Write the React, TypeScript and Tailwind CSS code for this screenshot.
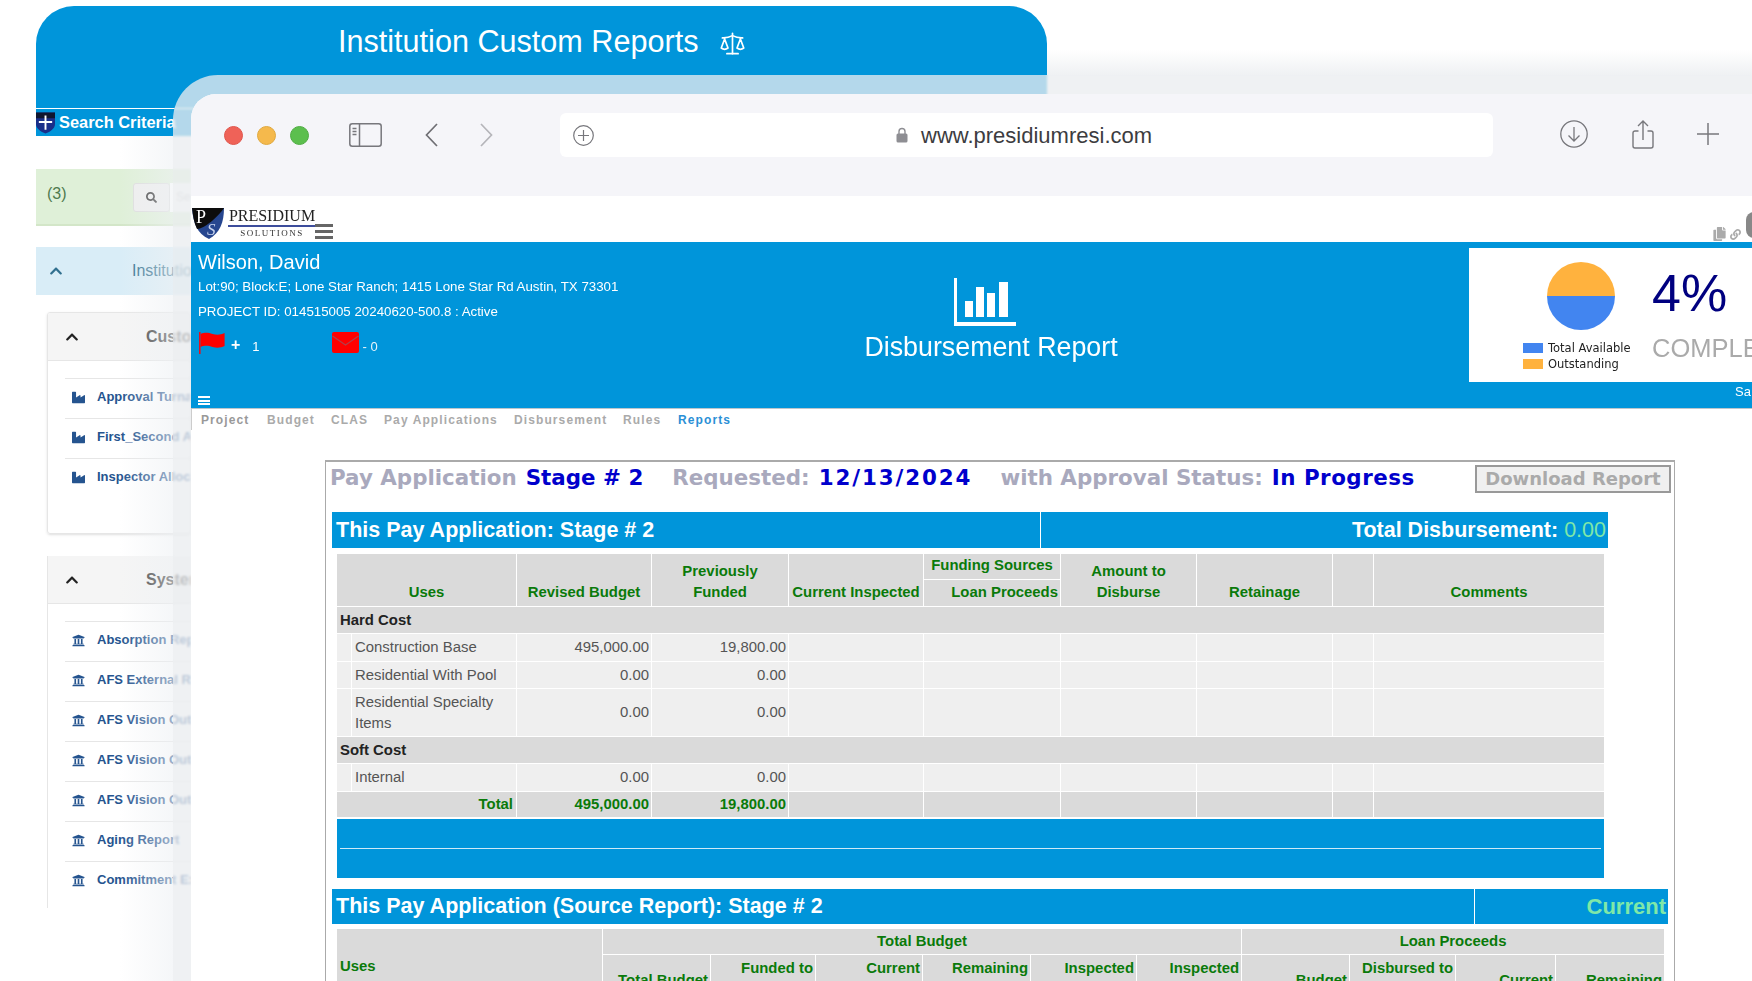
import { FaIndustry, FaChevronUp, FaSearch, FaUniversity, FaLink, FaCopy } from 'react-icons/fa';
import { Scale } from 'lucide-react';

// 背景窗口左侧的列表
const customRows = ['Approval Turnaround', 'First_Second Approval', 'Inspector Allocation'];
const systemRows = [
  'Absorption Report',
  'AFS External Report',
  'AFS Vision Outstanding',
  'AFS Vision Outstanding',
  'AFS Vision Outstanding',
  'Aging Report',
  'Commitment Export',
];

function ListRow({ label, bank }: { label: string; bank?: boolean }) {
  return (
    <div className="ml-[17px] flex h-[40px] items-center gap-[12px] border-t border-[#e6e6e6] pb-[3px] pl-[7px] text-[13px] font-bold whitespace-nowrap text-[#25548f]">
      {bank ? (
        <FaUniversity className="h-[13px] w-[13px] shrink-0 text-[#25548f]" />
      ) : (
        <FaIndustry className="h-[13px] w-[13px] shrink-0 text-[#25548f]" />
      )}
      {label}
    </div>
  );
}

function PanelHeader({ title }: { title: string }) {
  return (
    <div className="flex h-[48px] items-center border-b border-[#e6e6e6] bg-[#f5f5f5] pl-[17px]">
      <FaChevronUp className="h-[14px] w-[14px] shrink-0 text-[#222]" />
      <span className="ml-[67px] text-[16px] font-bold whitespace-nowrap text-[#333]">{title}</span>
    </div>
  );
}

function BackWindow() {
  return (
    <div className="absolute top-[6px] left-[36px] w-[1011px]">
      <div className="flex h-[102px] justify-start rounded-t-[38px] bg-[#0095da] pt-[16px] pl-[302px] text-white">
        <span className="text-[30.6px] leading-[38px]">Institution Custom Reports</span>
        <Scale className="mt-[8px] ml-[21px] h-[27px] w-[27px]" strokeWidth={1.5} />
      </div>
      <div className="mt-[1px] flex h-[27px] items-center bg-[#0095da] text-white">
        <svg viewBox="0 0 20 22" className="h-[22px] w-[19px] shrink-0">
          <path d="M0 0h20v12c0 5-5 8-10 10C5 20 0 17 0 12z" fill="#1a2f8a" />
          <path d="M0 0h20v6H0z" fill="#10162f" />
          <path d="M10 3v15M3 10h14" stroke="#fff" strokeWidth="2" />
        </svg>
        <span className="ml-[4px] text-[16.4px] font-bold whitespace-nowrap">Search Criteria</span>
      </div>
      <div className="mt-[33px] flex h-[57px] w-[155px] border-b-2 border-[#d3e6c8] bg-[#dff0d8] pl-[11px] text-[#4f7a4f]">
        <span className="mt-[13px] w-[20px] text-[16px]">(3)</span>
        <div className="mt-[14px] ml-[66px] flex h-[29px] w-[37px] shrink-0 items-center justify-center rounded-[3px] border border-[#ddd] bg-[#eeeeee]">
          <FaSearch className="h-[11px] w-[11px] text-[#333]" />
        </div>
        <div className="mt-[14px] h-[29px] flex-1 bg-white pl-[6px] text-[12px] leading-[29px] text-[#ccc]">Se</div>
      </div>
      <div className="mt-[21px] flex h-[48px] w-[155px] items-center bg-[#d9edf7] pl-[13px]">
        <FaChevronUp className="h-[14px] w-[14px] shrink-0 text-[#31708f]" />
        <span className="ml-[69px] text-[16px] whitespace-nowrap text-[#31708f]">Institutional</span>
      </div>
      <div className="mt-[17px] ml-[11px] h-[222px] w-[144px] overflow-hidden rounded-[3px] border border-[#e6e6e6] shadow-sm">
        <PanelHeader title="Custom" />
        <div className="mt-[17px]">
          {customRows.map((r, i) => (
            <ListRow key={i} label={r} />
          ))}
        </div>
      </div>
      <div className="mt-[22px] ml-[11px] h-[352px] w-[144px] overflow-hidden border-l border-[#e6e6e6]">
        <PanelHeader title="System" />
        <div className="mt-[17px]">
          {systemRows.map((r, i) => (
            <ListRow key={i} label={r} bank />
          ))}
        </div>
      </div>
    </div>
  );
}

function Toolbar() {
  return (
    <div className="flex h-[102px] items-start bg-[#f5f5f9] pt-[19px]">
      <div className="mt-[13px] ml-[33px] flex gap-[14px]">
        <span className="h-[19px] w-[19px] rounded-full border border-[#e0554c] bg-[#ef6258]" />
        <span className="h-[19px] w-[19px] rounded-full border border-[#e0a93f] bg-[#f5b94c]" />
        <span className="h-[19px] w-[19px] rounded-full border border-[#50ad44] bg-[#5cbf4e]" />
      </div>
      <svg viewBox="0 0 33 24" className="mt-[10px] ml-[40px] h-[24px] w-[33px]" fill="none" stroke="#77777c" strokeWidth="1.5">
        <rect x="0.8" y="0.8" width="31.4" height="22.4" rx="2.5" />
        <path d="M10.5 1v22M3.5 5.5h4M3.5 8.5h4M3.5 11.5h4" />
      </svg>
      <svg viewBox="0 0 13 24" className="mt-[10px] ml-[43px] h-[24px] w-[13px]" fill="none" stroke="#6f6f74" strokeWidth="1.7">
        <path d="M12 1L1.5 12 12 23" />
      </svg>
      <svg viewBox="0 0 13 24" className="mt-[10px] ml-[42px] h-[24px] w-[13px]" fill="none" stroke="#b5b5ba" strokeWidth="1.7">
        <path d="M1 1l10.5 11L1 23" />
      </svg>
      <div className="ml-[67px] flex h-[44px] w-[933px] items-center rounded-[6px] bg-white pl-[13px]">
        <svg viewBox="0 0 21 21" className="h-[21px] w-[21px]" fill="none" stroke="#77777c" strokeWidth="1.2">
          <circle cx="10.5" cy="10.5" r="9.8" />
          <path d="M10.5 5v11M5 10.5h11" />
        </svg>
        <svg viewBox="0 0 12 16" className="ml-[302px] h-[16px] w-[12px]">
          <path d="M3 7V4.5a3 3 0 0 1 6 0V7" fill="none" stroke="#8e8e93" strokeWidth="1.4" />
          <rect x="0.5" y="6.5" width="11" height="9" rx="1.5" fill="#8e8e93" />
        </svg>
        <span className="ml-[13px] text-[22px] text-[#3c3c40]">www.presidiumresi.com</span>
      </div>
      <svg viewBox="0 0 28 28" className="mt-[7px] ml-[67px] h-[28px] w-[28px]" fill="none" stroke="#77777c" strokeWidth="1.3">
        <circle cx="14" cy="14" r="13.2" />
        <path d="M14 7v14M8.5 15.5L14 21l5.5-5.5" />
      </svg>
      <svg viewBox="0 0 22 29" className="mt-[7px] ml-[44px] h-[29px] w-[22px]" fill="none" stroke="#77777c" strokeWidth="1.4">
        <path d="M6.5 11H3a2 2 0 0 0-2 2v13a2 2 0 0 0 2 2h16a2 2 0 0 0 2-2V13a2 2 0 0 0-2-2h-3.5M11 20V1.5M6 6l5-5 5 5" />
      </svg>
      <svg viewBox="0 0 22 22" className="mt-[10px] ml-[43px] h-[22px] w-[22px]" fill="none" stroke="#77777c" strokeWidth="1.5">
        <path d="M11 0v22M0 11h22" />
      </svg>
    </div>
  );
}

function Logo() {
  return (
    <div className="flex h-[46px] items-start bg-white">
      <svg viewBox="0 0 32 32" className="mt-[11px] ml-[1px] h-[32px] w-[32px] shrink-0">
        <path d="M0 1h32c0 14-4 25-15 31C5 27 1 15 0 1z" fill="#26468f" />
        <path d="M0 1h32C26 10 12 22 5 22 2 16 1 9 0 1z" fill="#0d0d0d" />
        <text x="4" y="16" fill="#fff" fontSize="18" fontFamily="Liberation Serif">P</text>
        <text x="15" y="28" fill="#c8d4ee" fontSize="17" fontStyle="italic" fontFamily="Liberation Serif">S</text>
      </svg>
      <div className="mt-[11px] ml-[4px] flex w-[88px] flex-col items-center font-['Liberation_Serif',serif]">
        <span className="text-[16px] leading-[18px] text-[#222]">PRESIDIUM</span>
        <span className="h-[2px] w-full bg-[#3d4d9c]" />
        <span className="mt-[1px] text-[9px] leading-[11px] tracking-[1.5px] text-[#333]">SOLUTIONS</span>
      </div>
      <div className="mt-[28px] -ml-[1px] flex w-[18px] flex-col gap-[3px]">
        <span className="h-[3px] bg-[#666]" />
        <span className="h-[3px] bg-[#666]" />
        <span className="h-[3px] bg-[#666]" />
      </div>
      <div className="ml-auto flex pt-[31px] pr-[11px] text-[#aaa]">
        <FaCopy className="h-[14px] w-[13px]" />
        <FaLink className="mt-[2px] ml-[4px] h-[11px] w-[11px]" />
      </div>
      <span className="absolute top-[118px] right-[-10px] h-[26px] w-[16px] rounded-full bg-[#888]" />
    </div>
  );
}

function BlueHeader() {
  return (
    <div className="grid h-[167px] grid-cols-[660px_280px_1fr] border-b border-[#bcc6cc] bg-[#0095da] text-white">
      <div className="flex flex-col pt-[8px] pl-[7px]">
        <div className="h-[24px] text-[20px] leading-[24px]">Wilson, David</div>
        <div className="mt-[1px] h-[24px] text-[13.3px] leading-[24px]">Lot:90; Block:E; Lone Star Ranch; 1415 Lone Star Rd Austin, TX 73301</div>
        <div className="mt-[1px] h-[24px] text-[13.3px] leading-[24px]">PROJECT ID: 014515005 20240620-500.8 : Active</div>
        <div className="mt-[8px] flex h-[23px] items-start pl-[1px]">
          <svg viewBox="0 0 26 22" className="h-[22px] w-[26px] shrink-0">
            <path d="M0 0h1.6v22H0z" fill="#e8101c" />
            <path d="M1.6 2c5-2 8-1 12 0s8 1 12-1v13c-4 2-8 2-12 1s-7-2-12 0z" fill="#ff0000" />
          </svg>
          <span className="mt-[4px] ml-[6px] text-[16px] leading-[18px] font-bold">+</span>
          <span className="mt-[7px] ml-[12px] text-[13px] leading-[16px]">1</span>
          <svg viewBox="0 0 27 21" className="ml-[72px] h-[21px] w-[27px] shrink-0">
            <rect width="27" height="21" rx="2" fill="#ff0000" />
            <path d="M0.5 4l13 9 13-9" fill="none" stroke="#b0404a" strokeWidth="1.2" />
          </svg>
          <span className="mt-[7px] ml-[4px] text-[13px] leading-[16px] text-[#e6f4fb]">- 0</span>
        </div>
        <div className="mt-auto mb-[3px] flex w-[12px] flex-col gap-[1.5px]">
          <span className="h-[2px] bg-white" />
          <span className="h-[2px] bg-white" />
          <span className="h-[2px] bg-white" />
        </div>
      </div>
      <div className="flex flex-col items-center pt-[36px]">
        <svg viewBox="0 0 62 48" className="mr-[12px] h-[48px] w-[62px]" fill="#fff">
          <path d="M0 0h3v44h59v4H0z" />
          <path d="M11 23h8v16h-8zM22 9h8v30h-8zM33 15h8v24h-8zM45 4h9v35h-9z" />
        </svg>
        <div className="mt-[4px] text-[26.8px] leading-[34px] whitespace-nowrap">Disbursement Report</div>
      </div>
      <div className="flex flex-col items-end overflow-hidden pt-[6px]">
        <div className="flex h-[134px] w-[283px] bg-white">
          <div className="flex w-[183px] shrink-0 flex-col">
            <div className="mt-[14px] ml-[78px] flex h-[68px] w-[68px] flex-col overflow-hidden rounded-full">
              <span className="h-[34px] bg-[#ffb23e]" />
              <span className="h-[34px] bg-[#4285f0]" />
            </div>
            <div className="mt-[10px] ml-[54px] font-['DejaVu_Sans',sans-serif] text-[11.5px] leading-[16px] whitespace-nowrap text-[#222]">
              <div className="flex items-center">
                <span className="mr-[5px] h-[10px] w-[20px] bg-[#4285f0]" />
                Total Available
              </div>
              <div className="flex items-center">
                <span className="mr-[5px] h-[10px] w-[20px] bg-[#ffb23e]" />
                Outstanding
              </div>
            </div>
          </div>
          <div className="whitespace-nowrap">
            <div className="mt-[15px] text-[52px] leading-[60px] text-[#000080]">4%</div>
            <div className="mt-[9px] text-[25.5px] leading-[32px] text-[#aaa]">COMPLETE</div>
          </div>
        </div>
        <span className="mt-[1px] w-[17px] overflow-hidden text-[13px] leading-[18px] whitespace-nowrap">Sa</span>
      </div>
    </div>
  );
}

const navItems = [
  { label: 'Project', w: 'w-[66px]', cls: 'text-[#999]' },
  { label: 'Budget', w: 'w-[64px]', cls: 'text-[#aaa]' },
  { label: 'CLAS', w: 'w-[53px]', cls: 'text-[#aaa]' },
  { label: 'Pay Applications', w: 'w-[130px]', cls: 'text-[#aaa]' },
  { label: 'Disbursement', w: 'w-[109px]', cls: 'text-[#aaa]' },
  { label: 'Rules', w: 'w-[55px]', cls: 'text-[#aaa]' },
  { label: 'Reports', w: 'w-[70px]', cls: 'text-[#2a8fd6]' },
];

function NavTabs() {
  return (
    <div className="flex h-[21px] items-center border-l border-[#ccc] pl-[9px] text-[12px] font-bold tracking-[1.1px]">
      {navItems.map(n => (
        <span key={n.label} className={`${n.w} ${n.cls}`}>
          {n.label}
        </span>
      ))}
    </div>
  );
}

const hdr = 'border border-white bg-[#dadada] font-bold text-[#0a7a0a] text-center align-bottom px-[2px] pb-[3px] leading-[21px]';
const empty = 'border border-white bg-[#efefef]';
const subHead = 'border border-white bg-[#dadada] pt-[2px] pr-[2px] text-right align-top';
const subHeadLow = 'border border-white bg-[#dadada] pt-[14px] pr-[2px] text-right align-top';

function CostRow({ label, budget, funded, h = 'h-[28px]' }: { label: string; budget: string; funded: string; h?: string }) {
  return (
    <tr className={h}>
      <td className={empty} />
      <td className="border border-white bg-[#efefef] px-[3px] leading-[21px] text-[#555]">{label}</td>
      <td className="border border-white bg-[#efefef] pr-[2px] text-right text-[#555]">{budget}</td>
      <td className="border border-white bg-[#efefef] pr-[2px] text-right text-[#555]">{funded}</td>
      {[0, 1, 2, 3, 4, 5].map(i => (
        <td key={i} className={empty} />
      ))}
    </tr>
  );
}

function SectionRow({ label }: { label: string }) {
  return (
    <tr className="h-[27px]">
      <td colSpan={10} className="border border-white bg-[#dadada] pl-[3px] font-bold text-[#222]">
        {label}
      </td>
    </tr>
  );
}

function DisbursementTable() {
  return (
    <table className="mt-[5px] ml-[4px] w-[1268px] table-fixed border-collapse text-[14.9px]">
      <colgroup>
        <col className="w-[15px]" />
        <col className="w-[165px]" />
        <col className="w-[135px]" />
        <col className="w-[137px]" />
        <col className="w-[135px]" />
        <col className="w-[137px]" />
        <col className="w-[136px]" />
        <col className="w-[136px]" />
        <col className="w-[41px]" />
        <col className="w-[231px]" />
      </colgroup>
      <thead>
        <tr className="h-[26px]">
          <th rowSpan={2} colSpan={2} className={hdr}>Uses</th>
          <th rowSpan={2} className={hdr}>Revised Budget</th>
          <th rowSpan={2} className={hdr}>Previously<br />Funded</th>
          <th rowSpan={2} className={`${hdr} whitespace-nowrap`}>Current Inspected</th>
          <th className={`${hdr} pb-[0px]`}>Funding Sources</th>
          <th rowSpan={2} className={hdr}>Amount to<br />Disburse</th>
          <th rowSpan={2} className={hdr}>Retainage</th>
          <th rowSpan={2} className={hdr} />
          <th rowSpan={2} className={hdr}>Comments</th>
        </tr>
        <tr className="h-[27px]">
          <th className={`${hdr} text-right`}>Loan Proceeds</th>
        </tr>
      </thead>
      <tbody>
        <SectionRow label="Hard Cost" />
        <CostRow label="Construction Base" budget="495,000.00" funded="19,800.00" />
        <CostRow label="Residential With Pool" budget="0.00" funded="0.00" h="h-[27px]" />
        <CostRow label="Residential Specialty Items" budget="0.00" funded="0.00" h="h-[48px]" />
        <SectionRow label="Soft Cost" />
        <CostRow label="Internal" budget="0.00" funded="0.00" />
        <tr className="h-[26px] font-bold text-[#0a7a0a]">
          <td colSpan={2} className="border border-white bg-[#dadada] pr-[3px] text-right">Total</td>
          <td className="border border-white bg-[#dadada] pr-[2px] text-right">495,000.00</td>
          <td className="border border-white bg-[#dadada] pr-[2px] text-right">19,800.00</td>
          {[0, 1, 2, 3, 4, 5].map(i => (
            <td key={i} className="border border-white bg-[#dadada]" />
          ))}
        </tr>
      </tbody>
    </table>
  );
}

function SourceTable() {
  return (
    <table className="mt-[4px] ml-[4px] w-[1328px] table-fixed border-collapse text-[14.9px] font-bold text-[#0a7a0a]">
      <colgroup>
        <col className="w-[266px]" />
        <col className="w-[108px]" />
        <col className="w-[105px]" />
        <col className="w-[107px]" />
        <col className="w-[108px]" />
        <col className="w-[106px]" />
        <col className="w-[105px]" />
        <col className="w-[108px]" />
        <col className="w-[106px]" />
        <col className="w-[100px]" />
        <col className="w-[109px]" />
      </colgroup>
      <thead>
        <tr className="h-[26px]">
          <th rowSpan={2} className="border border-white bg-[#dadada] pt-[26px] pl-[3px] text-left align-top">Uses</th>
          <th colSpan={6} className="border border-white bg-[#dadada]">Total Budget</th>
          <th colSpan={4} className="border border-white bg-[#dadada]">Loan Proceeds</th>
        </tr>
        <tr className="h-[60px]">
          <th className={subHeadLow}>Total Budget</th>
          <th className={subHead}>Funded to</th>
          <th className={subHead}>Current</th>
          <th className={subHead}>Remaining</th>
          <th className={subHead}>Inspected</th>
          <th className={subHead}>Inspected</th>
          <th className={subHeadLow}>Budget</th>
          <th className={subHead}>Disbursed to</th>
          <th className={subHeadLow}>Current</th>
          <th className={subHeadLow}>Remaining</th>
        </tr>
      </thead>
    </table>
  );
}

function ReportBody() {
  return (
    <div className="ml-[134px] h-[560px] w-[1350px] overflow-hidden border-t-2 border-r border-l border-[#aaa]">
      <div className="flex h-[50px] items-start pl-[4px] font-['DejaVu_Sans',sans-serif] text-[21.4px] leading-[32px] font-bold whitespace-nowrap text-[#a9a9bd]">
        <span>Pay Application</span>
        <span className="ml-[9px] text-[#0000cc]">Stage # 2</span>
        <span className="ml-[29px]">Requested:</span>
        <span className="ml-[9px] tracking-[1.9px] text-[#0000cc]">12/13/2024</span>
        <span className="ml-[28px]">with Approval Status:</span>
        <span className="ml-[9px] tracking-[0.5px] text-[#0000cc]">In Progress</span>
        <span className="mt-[3px] mr-[3px] ml-auto flex h-[28px] w-[196px] items-center justify-center border-2 border-[#999] bg-[#f0f0f0] text-[18px] text-[#aaa]">
          Download Report
        </span>
      </div>
      <div className="pl-[6px]">
        <div className="flex h-[36px] w-[1276px] items-center bg-[#0095da] text-[21.5px] font-bold text-white">
          <div className="flex h-full w-[709px] items-center border-r border-white pl-[4px]">This Pay Application: Stage # 2</div>
          <div className="flex-1 pr-[2px] text-right">
            Total Disbursement: <span className="font-normal text-[#7fe8a8]">0.00</span>
          </div>
        </div>
        <DisbursementTable />
        <div className="mt-[1px] ml-[5px] flex h-[59px] w-[1267px] flex-col bg-[#0095da] pt-[29px] pl-[3px]">
          <span className="h-px w-[1261px] bg-[#cfeaf7]" />
        </div>
        <div className="mt-[11px] flex h-[35px] w-[1336px] items-center bg-[#0095da] text-[21.5px] font-bold text-white">
          <div className="flex h-full w-[1143px] items-center border-r border-white pl-[4px]">This Pay Application (Source Report): Stage # 2</div>
          <div className="flex-1 pr-[2px] text-right text-[22px] text-[#7fe8a8]">Current</div>
        </div>
        <SourceTable />
      </div>
    </div>
  );
}

export default function App() {
  return (
    <div className="relative h-[981px] w-[1752px] overflow-hidden bg-white font-['Liberation_Sans',sans-serif]">
      <BackWindow />
      <div className="absolute top-[50px] right-0 left-[1047px] h-[25px] bg-gradient-to-b from-white to-[#eff1f3]" />
      <div className="absolute top-[136px] left-[120px] h-[845px] w-[53px] bg-gradient-to-r from-transparent to-[#eef1f4]/60" />
      <div className="absolute top-[75px] right-0 bottom-0 left-[173px] rounded-tl-[45px] bg-[rgba(234,237,239,0.77)] pt-[19px] pl-[18px] backdrop-blur-[1px]">
        <div className="relative h-[887px] overflow-hidden rounded-tl-[25px] bg-white">
          <Toolbar />
          <Logo />
          <BlueHeader />
          <NavTabs />
          <div className="mt-[30px]">
            <ReportBody />
          </div>
        </div>
      </div>
    </div>
  );
}
